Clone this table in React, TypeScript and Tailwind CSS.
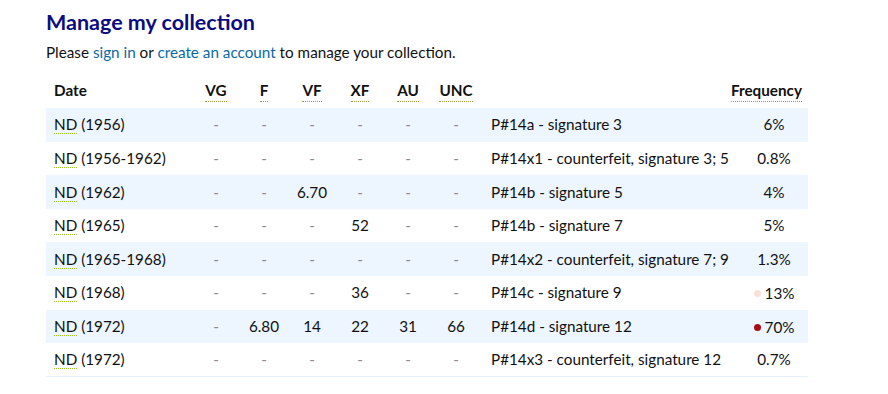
import React from 'react';

type Row = {
    date: string;
    grades: string[];
    desc: string;
    freq: string;
    dot?: string;
};

const rows: Row[] = [
    { date: '(1956)', grades: ['-', '-', '-', '-', '-', '-'], desc: 'P#14a - signature 3', freq: '6%' },
    { date: '(1956-1962)', grades: ['-', '-', '-', '-', '-', '-'], desc: 'P#14x1 - counterfeit, signature 3; 5', freq: '0.8%' },
    { date: '(1962)', grades: ['-', '-', '6.70', '-', '-', '-'], desc: 'P#14b - signature 5', freq: '4%' },
    { date: '(1965)', grades: ['-', '-', '-', '52', '-', '-'], desc: 'P#14b - signature 7', freq: '5%' },
    { date: '(1965-1968)', grades: ['-', '-', '-', '-', '-', '-'], desc: 'P#14x2 - counterfeit, signature 7; 9', freq: '1.3%' },
    { date: '(1968)', grades: ['-', '-', '-', '36', '-', '-'], desc: 'P#14c - signature 9', freq: '13%', dot: 'bg-[#fcded5]' },
    { date: '(1972)', grades: ['-', '6.80', '14', '22', '31', '66'], desc: 'P#14d - signature 12', freq: '70%', dot: 'bg-[#a50f15]' },
    { date: '(1972)', grades: ['-', '-', '-', '-', '-', '-'], desc: 'P#14x3 - counterfeit, signature 12', freq: '0.7%' },
];

const grades = ['VG', 'F', 'VF', 'XF', 'AU', 'UNC'];

const App: React.FC = () => {
    return (
        <div className="min-h-[394px] bg-white px-[46px] pt-[8px] text-[15.25px] text-[#111] [font-family:Lato,'Liberation_Sans',sans-serif]">
            <h2 className="text-[21.5px] font-bold leading-[28px] text-[#0c0c82]">Manage my collection</h2>
            <p className="mt-[5px] leading-[22px]">
                Please <a className="text-[#0b68a5]">sign in</a> or <a className="text-[#0b68a5]">create an account</a> to manage your collection.
            </p>

            <table className="mt-[16px] w-[762px] table-fixed border-collapse border-b border-[#e6f0fb]">
                <colgroup>
                    <col className="w-[146px]" />
                    <col className="w-[48px]" />
                    <col className="w-[48px]" />
                    <col className="w-[48px]" />
                    <col className="w-[48px]" />
                    <col className="w-[48px]" />
                    <col className="w-[48px]" />
                    <col className="w-[240px]" />
                    <col className="w-[88px]" />
                </colgroup>
                <thead>
                    <tr className="h-[29px]">
                        <th className="pl-[8px] text-left align-top font-bold">Date</th>
                        {grades.map(g => (
                            <th key={g} className="text-center align-top font-bold">
                                <span className="border-b border-dotted border-[#a3a343] pb-[2px]">{g}</span>
                            </th>
                        ))}
                        <th />
                        <th className="pr-[6px] text-right align-top font-bold">
                            <span className="border-b border-dotted border-[#a3a343] pb-[2px]">Frequency</span>
                        </th>
                    </tr>
                </thead>
                <tbody>
                    {rows.map((r, i) => (
                        <tr key={i} className={`h-[33.6px] ${i % 2 === 0 ? 'bg-[#edf5fe]' : 'bg-white'}`}>
                            <td className="pl-[8px]">
                                <span className="border-b border-dotted border-[#9ac424]">ND</span> {r.date}
                            </td>
                            {r.grades.map((g, j) => (
                                <td key={j} className={`text-center ${g === '-' ? 'text-[#8a8a8a]' : ''}`}>{g}</td>
                            ))}
                            <td className="pl-[11px] whitespace-nowrap">{r.desc}</td>
                            <td className="pl-[20px] text-center">
                                <span className="inline-flex items-center gap-[4px]">
                                    {r.dot && <span className={`inline-block h-[7px] w-[7px] rounded-full ${r.dot}`} />}
                                    {r.freq}
                                </span>
                            </td>
                        </tr>
                    ))}
                </tbody>
            </table>
        </div>
    );
};

export default App;
